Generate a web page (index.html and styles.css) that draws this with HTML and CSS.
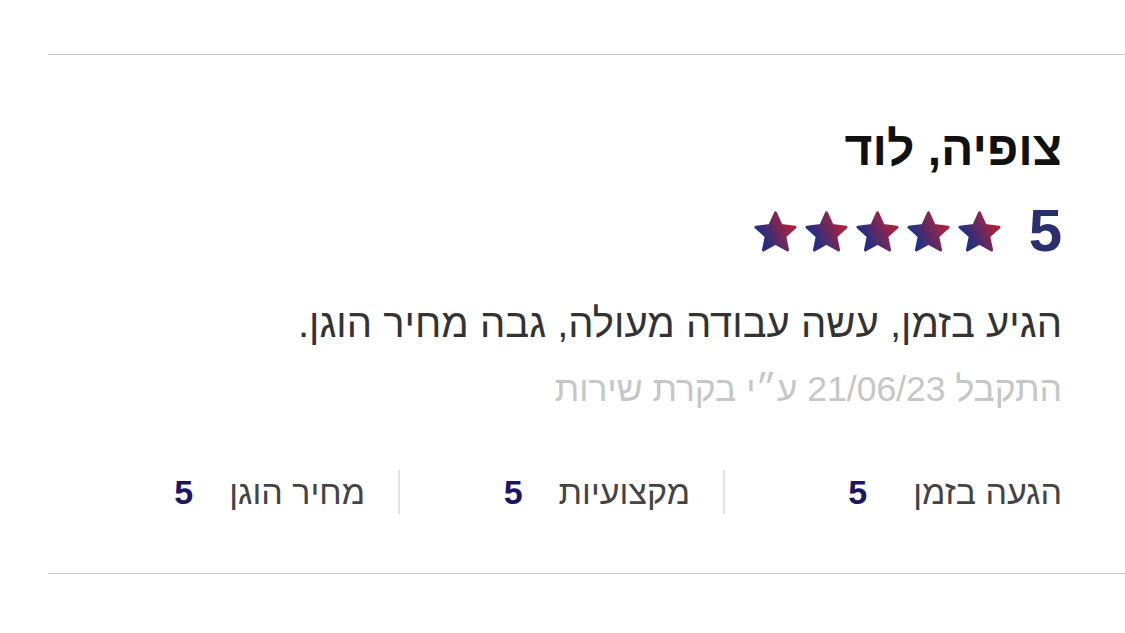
FILE: index.html
```html
<!DOCTYPE html>
<html lang="he" dir="rtl">
<head>
    <meta charset="UTF-8">
    <meta name="viewport" content="width=device-width, initial-scale=1.0">
    <title>ביקורת</title>
    <link rel="stylesheet" href="styles.css">
</head>
<body>
    <svg width="0" height="0" class="defs">
        <defs>
            <linearGradient id="starFill" x1="0" y1="0.75" x2="1" y2="0.25">
                <stop offset="0.2" stop-color="#292f80"/>
                <stop offset="0.85" stop-color="#a6233f"/>
            </linearGradient>
            <symbol id="star" viewBox="0 0 48 48">
                <path d="M24 5 L29.88 17.91 L43.97 19.51 L33.51 29.09 L36.35 42.99 L24 36 L11.65 42.99 L14.49 29.09 L4.03 19.51 L18.12 17.91 Z"
                      fill="url(#starFill)" stroke="url(#starFill)" stroke-width="3" stroke-linejoin="round"/>
            </symbol>
        </defs>
    </svg>

    <div class="review">
        <h2 class="review-title">צופיה, לוד</h2>

        <div class="rating">
            <span class="rating-score">5</span>
            <div class="stars">
                <svg class="star"><use href="#star"/></svg>
                <svg class="star"><use href="#star"/></svg>
                <svg class="star"><use href="#star"/></svg>
                <svg class="star"><use href="#star"/></svg>
                <svg class="star"><use href="#star"/></svg>
            </div>
        </div>

        <p class="review-text">הגיע בזמן, עשה עבודה מעולה, גבה מחיר הוגן.</p>
        <p class="review-meta">התקבל 21/06/23 ע״י בקרת שירות</p>

        <div class="scores">
            <div class="score">
                <span class="score-label">הגעה בזמן</span>
                <span class="score-value">5</span>
            </div>
            <div class="score">
                <span class="score-label">מקצועיות</span>
                <span class="score-value">5</span>
            </div>
            <div class="score">
                <span class="score-label">מחיר הוגן</span>
                <span class="score-value">5</span>
            </div>
        </div>
    </div>
</body>
</html>
```

FILE: styles.css
```css
body {
    margin: 0;
    background: #fff;
    font-family: "Liberation Sans", Arial, sans-serif;
}

.defs {
    position: absolute;
}

.review {
    margin: 54px 0 0 48px;
    padding: 66px 63px 59px 0;
    border-top: 1px solid #c9c9c9;
    border-bottom: 1px solid #c9c9c9;
}

.review-title {
    margin: 0;
    font-size: 48px;
    line-height: 56px;
    font-weight: bold;
    color: #111;
}

.rating {
    display: flex;
    align-items: center;
    gap: 26px;
    height: 60px;
    margin-top: 24px;
}

.rating-score {
    font-size: 60px;
    line-height: 60px;
    font-weight: bold;
    color: #2c2f6e;
}

.stars {
    display: flex;
    gap: 4px;
}

.star {
    width: 47px;
    height: 47px;
}

.review-text {
    margin: 39px 0 0;
    font-size: 40px;
    line-height: 46px;
    color: #333;
}

.review-meta {
    margin: 22px 0 0;
    font-size: 35.5px;
    line-height: 42px;
    color: #c6c6c6;
}

.scores {
    display: flex;
    margin-top: 60px;
}

.score {
    box-sizing: border-box;
    display: flex;
    align-items: center;
    gap: 36px;
    width: 325px;
    height: 44px;
    padding-right: 33px;
    border-right: 2px solid #e2e2e2;
}

.score:first-child {
    width: 337px;
    gap: 46px;
    padding-right: 0;
    border-right: none;
}

.score-label {
    font-size: 34px;
    color: #444;
}

.score-value {
    font-size: 34px;
    font-weight: bold;
    color: #1c1563;
}
```
